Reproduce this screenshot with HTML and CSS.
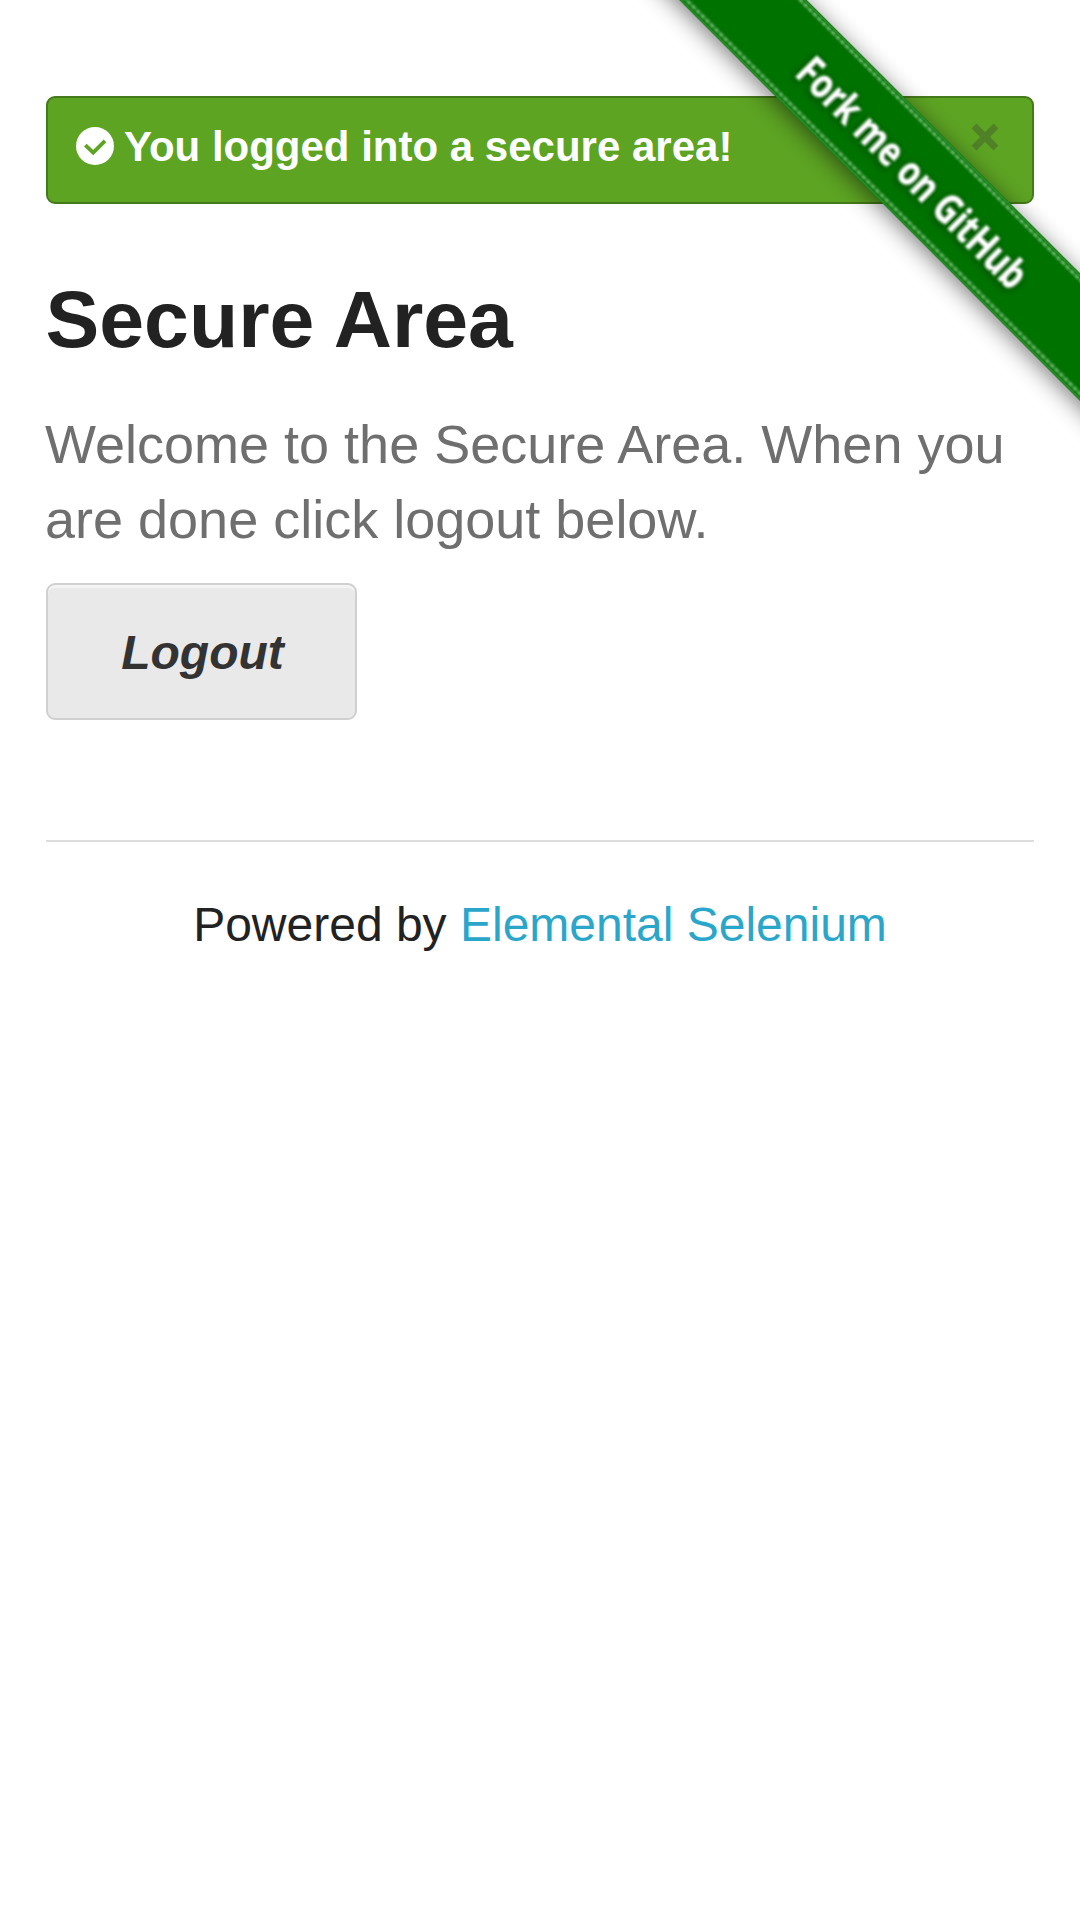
FILE: index.html
```html
<!DOCTYPE html>
<html lang="en">
<head>
<meta charset="utf-8">
<title>The Internet</title>
<link rel="stylesheet" href="styles.css">
</head>
<body>
<div class="page">
  <div class="flash">
    <svg class="flash-icon" viewBox="0 0 38 38" aria-hidden="true"><circle cx="19" cy="19" r="19" fill="#fff"/><path d="M9.3 18.2 17.2 25.6 29 13.8" fill="none" stroke="#5da423" stroke-width="3.8"/></svg>
    <span class="flash-text">You logged into a secure area!</span>
    <a class="close" href="#" aria-label="Close"><svg viewBox="0 0 28 28"><path d="M3 3 25 25M25 3 3 25" fill="none" stroke="#333" stroke-width="7"/></svg></a>
  </div>
  <h2 class="title">Secure Area</h2>
  <h4 class="subheader">Welcome to the Secure Area. When you are done click logout below.</h4>
  <a class="button" href="#">Logout</a>
  <footer class="footer">Powered by <a class="link" href="#">Elemental Selenium</a></footer>
</div>
<a class="ribbon" href="#">
  <svg viewBox="0 0 447 447">
    <defs>
      <filter id="shade" x="-20%" y="-100%" width="140%" height="300%"><feGaussianBlur stdDeviation="12"/></filter>
      <filter id="soft" x="-10%" y="-20%" width="120%" height="140%"><feGaussianBlur stdDeviation="0.8"/></filter>
    </defs>
    <g transform="translate(278 168) rotate(45)">
      <rect x="-400" y="-40" width="800" height="88" fill="#000" opacity=".55" filter="url(#shade)"/>
      <rect x="-400" y="-45" width="800" height="90" fill="#007200"/>
      <path class="edge" d="M-400-44H400M-400 44H400"/>
      <path class="stitch" d="M-400-40.5H400M-400 40H400" filter="url(#soft)"/>
      <text class="ribbon-text" x="-149" y="17" textLength="307" lengthAdjust="spacingAndGlyphs" filter="url(#soft)">Fork me on GitHub</text>
    </g>
  </svg>
</a>
</body>
</html>
```
FILE: styles.css
```css
* { box-sizing: border-box; }
body {
  margin: 0;
  position: relative;
  overflow: hidden;
  min-height: 1920px;
  background: #fff;
  color: #222;
  font: 48px/72px "Liberation Sans", Arial, sans-serif;
}
a { text-decoration: none; }
.page { padding: 96px 46px 0; }
.flash {
  display: flex;
  height: 108px;
  padding: 29px 33px 0 28px;
  border: 2px solid #457a1a;
  border-radius: 9px;
  background: #5da423;
  color: #fff;
}
.flash-icon { width: 38px; height: 38px; margin-right: 10px; }
.flash-text { flex: 1; font-size: 42px; line-height: 42px; font-weight: bold; margin-top: -1px; }
.close { width: 28px; height: 28px; margin-top: -4px; opacity: .3; }
.close svg { display: block; width: 28px; height: 28px; }
.title { margin: 59px 0 0 -.5px; font-size: 80.6px; line-height: 113px; font-weight: bold; }
.subheader { margin: 31px 0 26px -1px; font-size: 54px; line-height: 75px; font-weight: normal; color: #6f6f6f; }
.button {
  display: block;
  width: 311px;
  height: 137px;
  padding-left: 2px;
  border: 2px solid #d0d0d0;
  border-radius: 9px;
  background: #e9e9e9;
  box-shadow: inset 0 3px 0 rgba(255, 255, 255, .5);
  color: #333;
  font-weight: bold;
  font-style: italic;
  line-height: 135px;
  text-align: center;
}
.footer {
  margin-top: 120px;
  padding-top: 47px;
  border-top: 2px solid #ddd;
  text-align: center;
}
.link { color: #2ba6cb; }
.ribbon { position: absolute; top: 0; right: 0; width: 447px; height: 447px; }
.ribbon svg { display: block; width: 447px; height: 447px; }
.edge { fill: none; stroke: #238923; stroke-width: 2; }
.stitch { fill: none; stroke: #76bb76; stroke-width: 3.2; stroke-dasharray: 5 1.5; }
.ribbon-text { font: 700 41px "Open Sans", "Noto Sans", sans-serif; fill: #fff; text-shadow: 0 2px 8px rgba(0, 40, 0, .8); }
```
